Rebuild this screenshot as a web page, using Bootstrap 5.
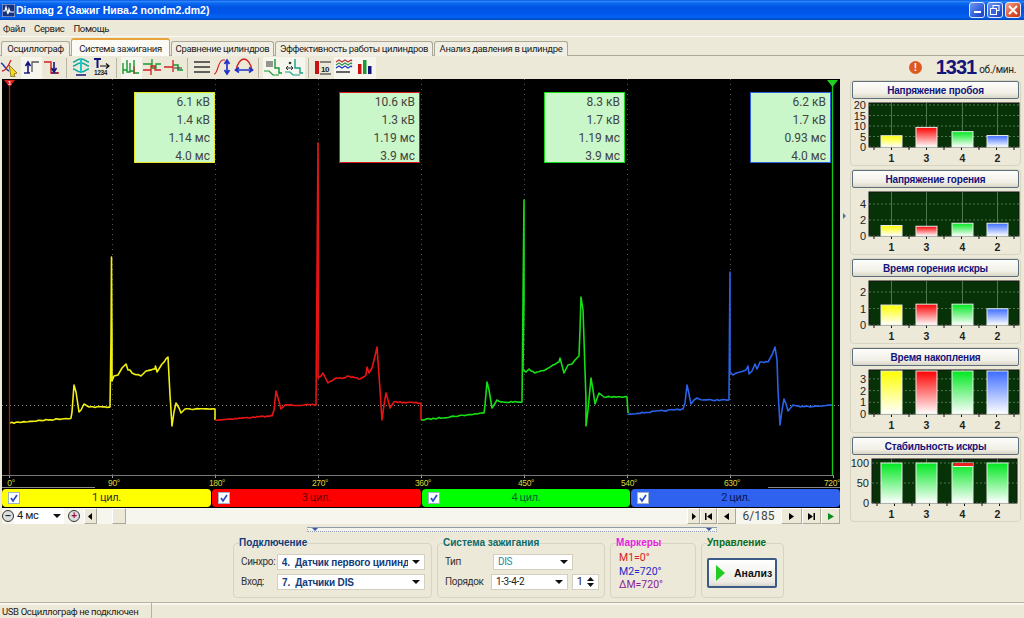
<!DOCTYPE html>
<html lang="ru">
<head>
  <meta charset="UTF-8" />
  <meta name="viewport" content="width=device-width, initial-scale=1" />
  <title>Diamag 2</title>
  <link href="https://cdn.jsdelivr.net/npm/bootstrap@5.3.0/dist/css/bootstrap.min.css" rel="stylesheet" />
  <style>
    html, body { height: 100%; }
    body {
      width: 1024px;
      height: 618px;
      overflow: hidden;
      background: #ece9d8;
      color: #222;
      font: 9.5px/1.2 Roboto, "Liberation Sans", sans-serif;
      letter-spacing: -.35px;
      white-space: nowrap;
    }
    /* Window title */
    .win-title {
      height: 20px;
      padding: 0 3px 0 2px;
      color: #fff;
      font: bold 10.5px "Liberation Sans", sans-serif;
      letter-spacing: 0;
      background: linear-gradient(#0a5ae8, #2c86fa 8%, #0a68f0 16%, #0054e3 35%, #0056ea 65%, #0464f4 85%, #0046bb 100%);
    }
    .win-icon { margin-right: 1px; }
    .win-btn {
      width: 16px;
      height: 16px;
      margin-left: 2px;
      border: 1px solid #dfe8fb;
      border-radius: 3px;
      background: linear-gradient(135deg, #6f97ee, #2a55d8 70%, #1c3fb8);
    }
    .win-btn.is-close { background: linear-gradient(135deg, #f0a58c, #e0512c 60%, #c23512); }
    .win-menu { height: 17px; padding: 1px 3px 0; border-bottom: 1px solid #f8f7f0; }
    .win-menu span { margin-right: 9px; }
    /* Tabs */
    .tab-strip { height: 19px; padding: 1px 0 0 1px; border-bottom: 1px solid #aca899; }
    .tab-strip .nav-link {
      height: 15px;
      margin: 3px 1px 0 0;
      padding: 0;
      text-align: center;
      color: #222;
      background: #f1efe4;
      border: 1px solid #aca899;
      border-bottom: 0;
      border-radius: 3px 3px 0 0;
      font-size: 9.5px;
      line-height: 14px;
    }
    .tab-strip .nav-link.active {
      height: 18px;
      margin-top: 0;
      padding-top: 2px;
      background: #fbfaf5;
      color: #222;
      border-top: 2px solid #e8a33a;
      border-color: #e8a33a #aca899 #fbfaf5;
    }
    .tab-a { width: 69px; }
    .tab-b { width: 99px; }
    .tab-c { width: 103px; }
    .tab-d { width: 158px; }
    .tab-e { width: 134px; }
    /* Toolbar */
    .tool-row { height: 23px; }
    .tool-btn { width: 21px; height: 22px; }
    .tool-btn.is-on { background: #f6f5ee; }
    .tool-btn svg { width: 20px; height: 20px; }
    .tool-sep { width: 8px; height: 20px; }
    .tool-sep::after { content: ""; display: block; width: 1px; height: 20px; margin-left: 3px; background: #b8b5a4; }
    .rpm-num { margin: 0 3px 0 14px; color: #14147a; font: bold 20px/23px "Liberation Sans", sans-serif; letter-spacing: -1px; }
    .rpm-unit { padding-top: 5px; font-size: 10px; }
    .rpm-alert {
      width: 13px; height: 13px; border-radius: 50%;
      color: #fff; background: #dd5a1e; text-align: center;
      font: bold 10px/13px "Liberation Sans", sans-serif;
    }
    /* Scope */
    .work-area { height: 446px; }
    .scope-col { width: 838px; margin-left: 2px; }
    .scope-box { position: relative; height: 409px; background: #000; }
    .scope-box svg { display: block; }
    .info-box {
      position: absolute;
      top: 13px;
      width: 81px;
      height: 71px;
      padding: 0 4px 0 0;
      text-align: right;
      color: #444;
      background: #c9f7c9;
      border: 1px solid;
      font-size: 12px;
      letter-spacing: 0;
      line-height: 18px;
    }
    .info-1 { left: 132px; border-color: #e6e628; }
    .info-2 { left: 337px; border-color: #d81818; }
    .info-3 { left: 542px; border-color: #18d818; }
    .info-4 { left: 748px; border-color: #3060e0; }
    .chan-strip { height: 20px; padding: 1px 0; gap: 1px; background: #000; }
    .chan-item { flex: 1 1 0; border-radius: 4px; position: relative; text-align: center; line-height: 18px; font-size: 11px; }
    .chan-yellow { background: #ff0; color: #333; }
    .chan-red { background: #f00; color: #6a0000; }
    .chan-green { background: #0f0; color: #063; }
    .chan-blue { background: #2f62ee; color: #08185e; }
    .chan-check {
      position: absolute; left: 6px; top: 3px;
      width: 12px; height: 12px;
      background: #fff; border: 1px solid #9db3c8;
    }
    .chan-check svg { display: block; width: 10px; height: 10px; }
    /* Scroller */
    .scroll-row { height: 16px; background: #f6f5ee; }
    .nav-cell {
      height: 16px;
      background: #ece9d8;
      border: 1px solid; border-color: #fff #aca899 #aca899 #fff;
      display: flex; align-items: center; justify-content: center;
    }
    .nav-cell svg { width: 9px; height: 9px; }
    .w-13 { width: 13px; }
    .w-17 { width: 17px; }
    .w-19 { width: 19px; }
    .w-21 { width: 21px; }
    .round-sign { width: 12px; height: 12px; border-radius: 50%; border: 1px solid #333; background: #ddd; font: bold 10px/9px "Liberation Sans", sans-serif; text-align: center; }
    .round-plus { color: #a01010; }
    .zoom-box { width: 50px; height: 16px; padding: 1px 3px; background: #fff; font-size: 11px; }
    .caret-down { width: 0; height: 0; border: 4px solid transparent; border-top-color: #111; border-bottom: 0; }
    .scroll-track { position: relative; }
    .scroll-thumb {
      position: absolute; left: 15px; top: 0;
      width: 14px; height: 16px;
      background: #ece9d8;
      border: 1px solid; border-color: #fff #aca899 #aca899 #fff;
    }
    .page-count { width: 45px; text-align: center; font-size: 12px; color: #444; line-height: 16px; letter-spacing: 0; }
    /* Side panels */
    .side-gap { width: 10px; position: relative; }
    .side-arrow { position: absolute; left: 3px; top: 134px; width: 0; height: 0; border: 3px solid transparent; border-left-color: #4a6fb5; border-right: 0; }
    .side-col { width: 171px; padding-top: 1px; }
    .meter-panel { height: 86px; margin-bottom: 3px; border: 1px solid #d8d4c0; border-radius: 4px; }
    .meter-title {
      height: 18px; margin: 0 1px;
      color: #14147a; text-align: center;
      font: bold 10px/17px "Liberation Sans", sans-serif;
      letter-spacing: -.2px;
      background: linear-gradient(#fdfdfb, #f1efe6 70%, #d9d6c6);
      border: 1px solid #5d6f7c;
      border-radius: 2px;
    }
    .meter-panel svg { display: block; margin: 1px 0 0 -1px; overflow: visible; letter-spacing: 0; }
    /* Bottom controls */
    .split-handle { height: 5px; width: 410px; margin: 2px 0 0 307px; border: 1px dotted #8c9bb0; border-top-style: solid; background: #f4f3ec; position: relative; }
    .split-handle::before, .split-handle::after { content: ""; position: absolute; top: 0; width: 0; height: 0; border: 3px solid transparent; border-top-color: #3a5aa5; border-bottom: 0; }
    .split-handle::before { left: 4px; }
    .split-handle::after { right: 4px; }
    .ctl-row { height: 66px; padding: 4px 0 0 233px; gap: 5px; }
    .ctl-group { height: 62px; padding: 0 5px; border: 1px solid #d8d4c0; border-radius: 4px; }
    .ctl-group legend {
      float: none; width: auto; margin: 0; padding: 0;
      font: bold 10px/14px "Liberation Sans", sans-serif;
      letter-spacing: 0;
    }
    .grp-link { width: 199px; }
    .grp-link legend { color: #123a7a; }
    .grp-fire { width: 168px; }
    .grp-fire legend { color: #0f6a6a; }
    .grp-mark { width: 86px; }
    .grp-mark legend { color: #e81ee0; }
    .grp-run { width: 83px; }
    .grp-run legend { color: #0a6a1e; }
    .ctl-label { color: #333; padding-left: 2px; font-size: 10px; }
    .lbl-link { width: 38px; }
    .lbl-fire { width: 50px; }
    .drop-box {
      height: 16px; padding: 0 4px; background: #fff;
      border: 1px solid #d4d0c0;
      overflow: hidden;
    }
    .drop-box.is-bold { color: #123a7a; font: bold 10px "Liberation Sans", sans-serif; letter-spacing: -.15px; margin-right: 1px; }
    .drop-fire { width: 80px; font-size: 10px; }
    .drop-dis { color: #2a8a9a; }
    .drop-text { overflow: hidden; flex: 1 1 auto; }
    .spin-box { width: 28px; height: 16px; padding: 0 4px; background: #fff; border: 1px solid #d4d0c0; font-size: 11px; }
    .mark-line { font-size: 10.5px; line-height: 13.5px; letter-spacing: 0; padding-left: 3px; }
    .mark-first { margin-top: 1px; color: #d82020; }
    .mark-m2 { color: #2626c8; }
    .mark-dm { color: #8a1a9a; }
    .run-btn {
      width: 70px; height: 30px; margin: 8px 0 0; padding: 0 0 0 7px;
      background: linear-gradient(#fff, #ecebe3 85%, #d8d6ca);
      border: 2px solid #3c5a86; border-radius: 2px;
      color: #111; font: bold 10.5px "Liberation Sans", sans-serif;
      letter-spacing: 0;
      gap: 9px;
    }
    .run-tri { width: 0; height: 0; border: 8px solid transparent; border-left: 9px solid #22cc22; border-right: 0; }
    .status-bar { height: 16px; margin-top: 4px; border-top: 1px solid #b5b29f; box-shadow: inset 0 2px 0 #f8f7f0; }
    .status-cell { width: 152px; padding: 3px 2px 0; border-right: 1px solid #b5b29f; }
  </style>
</head>
<body class="d-flex flex-column">
  <!-- Title bar -->
  <div class="win-title d-flex align-items-center">
    <svg width="13" height="13" viewBox="0 0 13 13" class="win-icon flex-shrink-0"><rect width="13" height="13" fill="#16327e" stroke="#c8d4ee"/><path d="M1 7h2l1-4 2 7 1-5 1 3h4" fill="none" stroke="#fff" stroke-width="1.2"/></svg>
    <span class="flex-grow-1">Diamag 2 (Зажиг Нива.2 nondm2.dm2)</span>
    <div class="win-btn d-flex align-items-end justify-content-center pb-1"><svg width="7" height="2"><rect width="7" height="2" fill="#fff"/></svg></div>
    <div class="win-btn d-flex align-items-center justify-content-center"><svg width="10" height="10" fill="none" stroke="#fff"><rect x="3" y=".5" width="6" height="5"/><rect x=".5" y="3.5" width="6" height="6" fill="#3a64dc"/></svg></div>
    <div class="win-btn is-close d-flex align-items-center justify-content-center"><svg width="10" height="10" stroke="#fff" stroke-width="2"><path d="M1 1l8 8M9 1l-8 8"/></svg></div>
  </div>

  <!-- Menu -->
  <div class="win-menu d-flex align-items-center"><span>Файл</span><span>Сервис</span><span>Помощь</span></div>

  <!-- Tabs -->
  <ul class="nav nav-tabs tab-strip flex-nowrap">
    <li class="nav-item"><a class="nav-link tab-a" href="#">Осциллограф</a></li>
    <li class="nav-item"><a class="nav-link tab-b active" href="#">Система зажигания</a></li>
    <li class="nav-item"><a class="nav-link tab-c" href="#">Сравнение цилиндров</a></li>
    <li class="nav-item"><a class="nav-link tab-d" href="#">Эффективность работы цилиндров</a></li>
    <li class="nav-item"><a class="nav-link tab-e" href="#">Анализ давления в цилиндре</a></li>
  </ul>

  <!-- Toolbar -->
  <div class="tool-row d-flex align-items-center">
    <div class="tool-btn"><svg viewBox="0 0 20 20" fill="none"><path d="M1 6c3 1 4 6 8 8" stroke="#2a3fb5" stroke-width="1.5"/><path d="M2 14c3 0 6-4 9-11" stroke="#d02020" stroke-width="1.3"/><path d="M9 8l8 8-3 1 1 3-3-1-1 1z" fill="#f5d820" stroke="#665500" stroke-width=".7"/></svg></div>
    <div class="tool-btn is-on"><svg viewBox="0 0 20 20" fill="none"><path d="M7 16V6M4.500 9L7 5l2.500 4" stroke="#14147a" stroke-width="1.6"/><path d="M3 16h6" stroke="#14147a" stroke-width="1.400"/><path d="M11 15V5h7" stroke="#555" stroke-width="1.300"/></svg></div>
    <div class="tool-btn"><svg viewBox="0 0 20 20" fill="none"><path d="M2 5h7v11h8" stroke="#d02020" stroke-width="1.400"/><path d="M12 5v9M9.500 11l2.500 4 2.500-4" stroke="#14147a" stroke-width="1.600"/><path d="M9 16h7" stroke="#14147a"/></svg></div>
    <div class="tool-sep"></div>
    <div class="tool-btn"><svg viewBox="0 0 20 20" fill="none"><path d="M2 5c3 0 3-3 8-3s5 3 8 3M2 9c3 0 3-3 8-3s5 3 8 3M2 12c3 0 3 3 8 3s5-3 8-3" stroke="#12a8a0" stroke-width="1.500"/><path d="M10 2v14" stroke="#1cc" stroke-width="2"/><path d="M5 18h10" stroke="#14147a" stroke-width="1.500"/></svg></div>
    <div class="tool-btn"><svg viewBox="0 0 20 20" fill="none"><path d="M2 2h7M5.500 2v9" stroke="#14147a" stroke-width="2"/><path d="M8 9h9M14 6.500L17 9l-3 2.500" stroke="#111" stroke-width="1.200"/><text x="2" y="18" font-family="Liberation Sans" font-size="6.500" font-weight="700" fill="#222">1234</text></svg></div>
    <div class="tool-sep"></div>
    <div class="tool-btn is-on"><svg viewBox="0 0 20 20" fill="none"><path d="M2 17V6M2 13h4V3v12h3V6v8h4V3v13h5" stroke="#159a30" stroke-width="1.400"/><path d="M13 9v8" stroke="#d02020"/></svg></div>
    <div class="tool-btn"><svg viewBox="0 0 20 20" fill="none"><path d="M1 7h9V2v9h4V7h5" stroke="#159a30" stroke-width="1.300"/><path d="M1 13h8v5-9h4v4h6" stroke="#d02020" stroke-width="1.300"/></svg></div>
    <div class="tool-btn"><svg viewBox="0 0 20 20" fill="none"><path d="M1 10h9M10 10V3v12" stroke="#d02020" stroke-width="1.300"/><path d="M10 8h5v5h5" stroke="#159a30" stroke-width="1.500"/><path d="M11 11h8" stroke="#333"/></svg></div>
    <div class="tool-sep"></div>
    <div class="tool-btn"><svg viewBox="0 0 20 20" stroke="#333" stroke-width="1.300"><path d="M2 5h16M2 10h16M2 15h16"/></svg></div>
    <div class="tool-btn"><svg viewBox="0 0 20 20" fill="none"><path d="M1 17c4 0 4-14 9-14h2" stroke="#d02020" stroke-width="1.200"/><path d="M14 4v13M11.500 7L14 3l2.500 4M11.500 13l2.500 4 2.500-4" stroke="#2233c8" stroke-width="1.700"/></svg></div>
    <div class="tool-btn"><svg viewBox="0 0 20 20" fill="none"><path d="M2 14C3 6 7 2 10 2s7 4 8 12" stroke="#d02020" stroke-width="1.300"/><path d="M2 13h16M5 10.500L1.500 13 5 15.500M15 10.500l3.500 2.500-3.500 2.500" stroke="#2233c8" stroke-width="1.600"/></svg></div>
    <div class="tool-sep"></div>
    <div class="tool-btn is-on"><svg viewBox="0 0 20 20" fill="none"><path d="M12 2v9h4v5h3" stroke="#159a30" stroke-width="1.400"/><path d="M1 14h5l4 4h6" stroke="#159a30" stroke-width="1.200"/><path d="M3 5h7M3 7h7M3 9h7" stroke="#333"/></svg></div>
    <div class="tool-btn is-on"><svg viewBox="0 0 20 20" fill="none"><path d="M11 2v9h5v5h3" stroke="#16a085" stroke-width="1.400"/><path d="M1 15h5l3 3h7" stroke="#16a085" stroke-width="1.200"/><path d="M2 11h7M4 9l-2 2 2 2M7 9l2 2-2 2" stroke="#333"/><circle cx="6" cy="6" r="1.300" fill="#333"/></svg></div>
    <div class="tool-sep"></div>
    <div class="tool-btn"><svg viewBox="0 0 20 20"><rect x="2" y="4" width="4" height="13" fill="#cc1111"/><path d="M7 5h11M7 17h11" stroke="#222"/><text x="8" y="15" font-family="Liberation Sans" font-size="8" font-weight="700" fill="#222">10</text></svg></div>
    <div class="tool-btn is-on"><svg viewBox="0 0 20 20" fill="none"><path d="M2 5l3-2 3 2 3-2 3 2 3-2 1 1" stroke="#c03030" stroke-width="1.200"/><path d="M2 8l3-2 3 2 3-2 3 2 3-2 1 1" stroke="#2a9a40" stroke-width="1.200"/><path d="M2 11l3-2 3 2 3-2 3 2 3-2 1 1" stroke="#2233c8" stroke-width="1.200"/><path d="M2 15h14" stroke="#333" stroke-width="1.500"/></svg></div>
    <div class="tool-btn is-on"><svg viewBox="0 0 20 20"><rect x="3" y="7" width="3.500" height="10" fill="#cc1111"/><rect x="8" y="3" width="3.500" height="14" fill="#1a9a30"/><rect x="13" y="9" width="3.500" height="8" fill="#14147a"/></svg></div>
    <div class="ms-auto d-flex align-items-center pe-2">
      <div class="rpm-alert">!</div>
      <div class="rpm-num">1331</div>
      <div class="rpm-unit">об./мин.</div>
    </div>
  </div>

  <!-- Scope and meters -->
  <div class="work-area d-flex">
    <div class="scope-col">
      <div class="scope-box">
        <svg id="scopeSvg" width="838" height="409" viewBox="2 79 838 409"></svg>
        <div class="info-box info-1">6.1 кВ<br>1.4 кВ<br>1.14 мс<br>4.0 мс</div>
        <div class="info-box info-2">10.6 кВ<br>1.3 кВ<br>1.19 мс<br>3.9 мс</div>
        <div class="info-box info-3">8.3 кВ<br>1.7 кВ<br>1.19 мс<br>3.9 мс</div>
        <div class="info-box info-4">6.2 кВ<br>1.7 кВ<br>0.93 мс<br>4.0 мс</div>
      </div>
      <div class="chan-strip d-flex">
        <div class="chan-item chan-yellow"><span class="chan-check"><svg viewBox="0 0 10 10" fill="none" stroke="#2a50c8" stroke-width="1.800"><path d="M2 5l2 3 4-6"/></svg></span>1 цил.</div>
        <div class="chan-item chan-red"><span class="chan-check"><svg viewBox="0 0 10 10" fill="none" stroke="#2a50c8" stroke-width="1.800"><path d="M2 5l2 3 4-6"/></svg></span>3 цил.</div>
        <div class="chan-item chan-green"><span class="chan-check"><svg viewBox="0 0 10 10" fill="none" stroke="#2a50c8" stroke-width="1.800"><path d="M2 5l2 3 4-6"/></svg></span>4 цил.</div>
        <div class="chan-item chan-blue"><span class="chan-check"><svg viewBox="0 0 10 10" fill="none" stroke="#2a50c8" stroke-width="1.800"><path d="M2 5l2 3 4-6"/></svg></span>2 цил.</div>
      </div>
      <div class="scroll-row d-flex align-items-center">
        <div class="round-sign">−</div>
        <div class="zoom-box d-flex align-items-center justify-content-between"><span>4 мс</span><span class="caret-down"></span></div>
        <div class="round-sign ms-1 round-plus">+</div>
        <div class="nav-cell w-13 ms-1"><svg viewBox="0 0 9 9"><path d="M6 1v7L2 4.500z"/></svg></div>
        <div class="scroll-track flex-grow-1 align-self-stretch"><div class="scroll-thumb"></div></div>
        <div class="nav-cell w-13"><svg viewBox="0 0 9 9"><path d="M3 1v7l4-3.500z"/></svg></div>
        <div class="nav-cell w-17"><svg viewBox="0 0 9 9"><path d="M1 1h1.500v7H1zM8 1v7L3 4.500z"/></svg></div>
        <div class="nav-cell w-19"><svg viewBox="0 0 9 9"><path d="M7 1v7L2 4.500z"/></svg></div>
        <div class="page-count">6/185</div>
        <div class="nav-cell w-21"><svg viewBox="0 0 9 9"><path d="M2 1v7l5-3.500z"/></svg></div>
        <div class="nav-cell w-19"><svg viewBox="0 0 9 9"><path d="M1 1v7l5-3.500zM6.500 1H8v7H6.500z"/></svg></div>
        <div class="nav-cell w-19"><svg viewBox="0 0 9 9"><path d="M2 1v7l6-3.500z" fill="#0a8a20"/></svg></div>
      </div>
    </div>
    <div class="side-gap"><span class="side-arrow"></span></div>
    <div class="side-col" id="sideCol"></div>
  </div>

  <!-- Connection, ignition, markers, control -->
  <div class="split-handle"></div>
  <div class="ctl-row d-flex">
    <fieldset class="ctl-group grp-link">
      <legend>Подключение</legend>
      <div class="d-flex align-items-center mb-1 mt-1">
        <span class="ctl-label lbl-link">Синхро:</span>
        <div class="drop-box is-bold d-flex align-items-center flex-grow-1"><span class="drop-text">4. &nbsp;Датчик первого цилинд</span><span class="caret-down ms-1"></span></div>
      </div>
      <div class="d-flex align-items-center">
        <span class="ctl-label lbl-link">Вход:</span>
        <div class="drop-box is-bold d-flex align-items-center flex-grow-1"><span class="drop-text">7. &nbsp;Датчики DIS</span><span class="caret-down ms-1"></span></div>
      </div>
    </fieldset>
    <fieldset class="ctl-group grp-fire">
      <legend>Система зажигания</legend>
      <div class="d-flex align-items-center mb-1 mt-1">
        <span class="ctl-label lbl-fire">Тип</span>
        <div class="drop-box drop-fire drop-dis d-flex align-items-center"><span class="drop-text">DIS</span><span class="caret-down"></span></div>
      </div>
      <div class="d-flex align-items-center">
        <span class="ctl-label lbl-fire">Порядок</span>
        <div class="drop-box drop-fire d-flex align-items-center"><span class="drop-text">1-3-4-2</span><span class="caret-down"></span></div>
        <div class="spin-box d-flex align-items-center justify-content-between ms-1"><span>1</span><svg width="7" height="12" viewBox="0 0 7 12"><path d="M3.500 1L7 5H0zM0 7h7l-3.500 4z" fill="#111"/></svg></div>
      </div>
    </fieldset>
    <fieldset class="ctl-group grp-mark">
      <legend>Маркеры</legend>
      <div class="mark-line mark-first">M1=0°</div>
      <div class="mark-line mark-m2">M2=720°</div>
      <div class="mark-line mark-dm">ΔM=720°</div>
    </fieldset>
    <fieldset class="ctl-group grp-run">
      <legend>Управление</legend>
      <button class="run-btn d-flex align-items-center" type="button"><span class="run-tri"></span>Анализ</button>
    </fieldset>
  </div>

  <!-- Status -->
  <div class="status-bar d-flex"><div class="status-cell">USB Осциллограф не подключен</div></div>

  <script src="https://cdn.jsdelivr.net/npm/bootstrap@5.3.0/dist/js/bootstrap.bundle.min.js"></script>
  <script>
    // Traces: page coordinates read off the screenshot
    const traces = [
      { color: '#f0f010', pts: [[10,423],[71,418],[72,412],[74,385],[76,392],[79,412],[81,410],[84,404],[89,407],[110,407],[111,340],[111.500,257],[112,340],[112,381],[114,376],[118,375],[122,368],[126,364],[128,370],[130,370],[132,373],[141,376],[146,371],[155,369],[155.500,366],[157,372],[162,364],[168,357],[170,395],[172,426],[174,412],[176,403],[179,408],[181,413],[185,409],[215,409],[215,420]] },
      { color: '#e81414', pts: [[215,420],[272,416],[274,410],[276,391],[278,398],[281,409],[285,405],[316,405],[317,275],[318,143],[318.500,275],[318,378],[321,376],[323,373],[328,383],[336,378],[345,378],[347,376],[360,379],[366,375],[367,367],[369,373],[372,368],[375,356],[377,347],[379,375],[381,405],[382,420],[384,405],[386,393],[388,400],[390,408],[394,402],[421,403],[421,420]] },
      { color: '#14e014', pts: [[421,420],[484,413],[485,405],[487,382],[489,390],[492,408],[494,405],[497,400],[503,402],[522,402],[523,300],[524,200],[524,300],[523,370],[526,372],[529,369],[535,373],[545,370],[553,365],[559,362],[560,358],[564,373],[568,365],[572,364],[575,360],[579,356],[580,330],[581,297],[583,310],[585,370],[586,400],[586,426],[588,410],[591,378],[593,390],[595,404],[599,393],[604,397],[627,397],[628,413]] },
      { color: '#2a62e8', pts: [[628,414],[683,409],[685,403],[687,385],[689,394],[691,404],[694,400],[697,398],[703,400],[729,400],[729.500,330],[730,272],[730,330],[730,372],[733,375],[740,372],[746,370],[748,366],[749,374],[752,371],[755,364],[757,369],[760,362],[768,362],[772,355],[775,347],[777,360],[778,390],[780,425],[782,410],[784,399],[786,404],[788,411],[793,405],[800,407],[832,405]] }
    ];

    // Small deterministic jitter, the traces are noisy
    let seed = 7;
    const rnd = () => (seed = (seed * 16807) % 2147483647) / 2147483647 - .5;
    function noisy(pts) {
      const out = [];
      pts.forEach((p, i) => {
        const next = pts[i + 1];
        out.push(p);
        if (next && next[0] - p[0] > 5) {
          for (let x = p[0] + 2; x < next[0]; x += 2) {
            const y = p[1] + (next[1] - p[1]) * (x - p[0]) / (next[0] - p[0]);
            out.push([x, +(y + rnd() * 1.2).toFixed(1)]);
          }
        }
      });
      return out.map(p => p.join(',')).join(' ');
    }

    let s = '';
    const marks = ['0°','90°','180°','270°','360°','450°','540°','630°','720°'];
    marks.forEach((m, i) => {
      const x = 9 + 103 * i;
      if (i > 0 && i < 8) s += `<line x1="${x}.5" y1="79" x2="${x}.5" y2="475" stroke="#555" stroke-dasharray="1 4"/>`;
      s += `<line x1="${x}.5" y1="475" x2="${x}.5" y2="478" stroke="#999"/>`;
      s += `<text x="${i == 8 ? x - 1 : x + 2}" y="486" fill="#d8d83a" font-size="8.500" font-family="Liberation Sans" text-anchor="middle">${m}</text>`;
    });
    s += '<line x1="2" y1="405.500" x2="840" y2="405.500" stroke="#8a8a8a" stroke-dasharray="1 3"/>';
    s += '<line x1="2" y1="475.500" x2="833" y2="475.500" stroke="#777"/>';
    s += '<line x1="2" y1="487.500" x2="95" y2="487.500" stroke="#888"/><line x1="768" y1="487.500" x2="840" y2="487.500" stroke="#888"/>';
    traces.forEach(t => {
      s += `<polyline points="${noisy(t.pts)}" fill="none" stroke="${t.color}" stroke-width="1.600" stroke-linejoin="round"/>`;
    });
    s += '<line x1="9.500" y1="82" x2="9.500" y2="475" stroke="#b01414" stroke-width="1.300"/>';
    s += '<path d="M4 80h11l-5.500 7z" fill="#e02020"/><text x="9.500" y="85" fill="#fff" font-size="6" font-weight="700" font-family="Liberation Sans" text-anchor="middle">1</text>';
    s += '<line x1="832.500" y1="82" x2="832.500" y2="475" stroke="#14c814" stroke-width="1.300"/>';
    s += '<path d="M827 80h11l-5.500 7z" fill="#20d020"/>';
    document.getElementById('scopeSvg').innerHTML = s;

    // Meter panels; axis scale and bar scale differ a little in the original
    const yellow = '#ffff00', red = '#ff0000', green = '#00e820', blue = '#3c6cff';
    const meters = [
      { title: 'Напряжение пробоя', x0: 869, x1: 1019, scale: 2.1, barScale: 1.85, ticks: [20,15,10,5,0], vals: [6.1,10.6,8.3,6.2], cols: [yellow,red,green,blue] },
      { title: 'Напряжение горения', x0: 869, x1: 1019, scale: 8, barScale: 7.5, ticks: [4,2,0], vals: [1.4,1.3,1.7,1.7], cols: [yellow,red,green,blue] },
      { title: 'Время горения искры', x0: 869, x1: 1019, scale: 16.500, barScale: 17.500, ticks: [2,1,0], vals: [1.14,1.19,1.19,.93], cols: [yellow,red,green,blue] },
      { title: 'Время накопления', x0: 869, x1: 1019, scale: 11.700, barScale: 11.700, ticks: [3,2,1,0], vals: [3.9,3.9,3.9,3.9], cols: [yellow,red,green,blue] },
      { title: 'Стабильность искры', x0: 872, x1: 1017, scale: .4, barScale: .4, ticks: [100,50,0], vals: [100,100,100,100], cols: [green,green,green,green], fail: 2 }
    ];
    const barX = [881, 916, 952, 987], names = [1, 3, 4, 2];
    let side = '';
    meters.forEach((m, k) => {
      let g = `<rect x="${m.x0}" y="3" width="${m.x1 - m.x0}" height="44" fill="#073207" stroke="#111"/>`;
      m.ticks.forEach(t => {
        const y = 47 - t * m.scale;
        g += `<line x1="${m.x0}" y1="${y}" x2="${m.x1}" y2="${y}" stroke="#4f754f" stroke-dasharray="2 2"/>`;
        g += `<text x="${m.x0 - 3}" y="${y + 4}" text-anchor="end" font-size="11" fill="#222">${t}</text>`;
      });
      for (let x = m.x0 + 5; x < m.x1; x += 17.500) g += `<line x1="${x}" y1="47" x2="${x}" y2="50" stroke="#111"/>`;
      m.vals.forEach((v, i) => {
        const id = `grad${k}_${i}`, cx = barX[i] + 10.500, h = Math.min(v * m.barScale, 43), top = 47 - h;
        g += `<line x1="${cx}" y1="3" x2="${cx}" y2="47" stroke="#4f754f"/>`;
        g += `<linearGradient id="${id}" x1="0" y1="0" x2="0" y2="1"><stop offset="0" stop-color="${m.cols[i]}"/><stop offset="1" stop-color="#fff"/></linearGradient>`;
        g += `<rect x="${barX[i]}" y="${top}" width="21" height="${h}" fill="url(#${id})" stroke="#e8ece8"/>`;
        if (m.fail === i) g += `<rect x="${barX[i] + 1}" y="${top}" width="20" height="3" fill="#e82020"/><rect x="${barX[i] + 1}" y="${top + 3}" width="20" height="1" fill="#e8f4e8"/>`;
        g += `<text x="${cx}" y="62" text-anchor="middle" font-size="10.500" font-weight="700" fill="#222">${names[i]}</text>`;
      });
      side += `<div class="meter-panel"><div class="meter-title">${m.title}</div><svg width="171" height="65" viewBox="850 0 171 65" font-family="Liberation Sans">${g}</svg></div>`;
    });
    document.getElementById('sideCol').innerHTML = side;
  </script>
</body>
</html>
